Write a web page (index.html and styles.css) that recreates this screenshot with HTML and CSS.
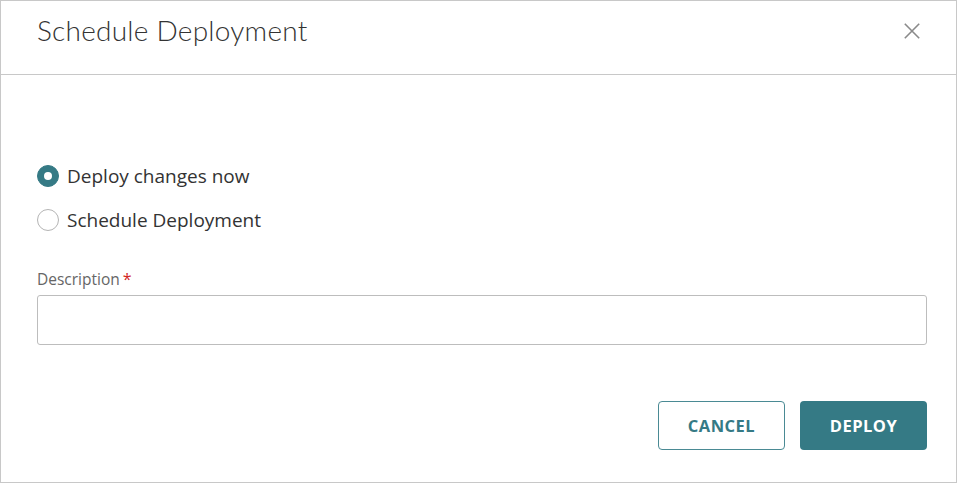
FILE: index.html
```html
<!DOCTYPE html>
<html>
<head>
<meta charset="utf-8">
<link rel="stylesheet" href="styles.css">
</head>
<body>
<div class="dialog">
  <div class="header">
    <h1 class="title">Schedule Deployment</h1>
    <button class="close" aria-label="Close">
      <svg width="16" height="16" viewBox="0 0 16 16"><path d="M0.8 0.8L15.2 15.2M15.2 0.8L0.8 15.2" stroke="#8a8a8a" stroke-width="1.6" fill="none"/></svg>
    </button>
  </div>
  <div class="body">
    <div class="radios">
      <label class="radio"><span class="dot checked"></span>Deploy changes now</label>
      <label class="radio"><span class="dot"></span>Schedule Deployment</label>
    </div>
    <div class="field">
      <div class="label">Description<span class="req">*</span></div>
      <div class="input"></div>
    </div>
    <div class="actions">
      <button class="btn btn-outline">CANCEL</button>
      <button class="btn btn-primary">DEPLOY</button>
    </div>
  </div>
</div>
</body>
</html>
```
FILE: styles.css
```css
html, body { margin: 0; padding: 0; background: #fff; }
body { font-family: "Open Sans", sans-serif; color: #333; }
.dialog {
  width: 955px;
  height: 481px;
  border: 1px solid #c8c8c8;
  display: flex;
  flex-direction: column;
}
.header {
  height: 61px;
  border-bottom: 1px solid #c8c8c8;
  display: flex;
  align-items: flex-start;
  justify-content: space-between;
  padding: 12px 36px 0 36px;
}
.title {
  margin: 0;
  font-family: "Lato", sans-serif;
  font-weight: 300;
  font-size: 28px;
  line-height: 34px;
  color: #333;
  letter-spacing: 0.25px;
}
.close {
  border: 0;
  background: none;
  padding: 0;
  margin-top: 10px;
  width: 16px;
  height: 16px;
  display: flex;
}
.body {
  flex: 1;
  padding: 90px 29px 0 36px;
  display: flex;
  flex-direction: column;
}
.radios { display: flex; flex-direction: column; gap: 22px; }
.radio {
  display: flex;
  align-items: center;
  gap: 8px;
  font-size: 19px;
  line-height: 22px;
  color: #333;
}
.dot {
  width: 20px;
  height: 20px;
  border: 1px solid #b4b4b4;
  border-radius: 50%;
  box-sizing: content-box;
  display: flex;
  align-items: center;
  justify-content: center;
}
.dot.checked { background: #357a85; border-color: #357a85; }
.dot.checked::after {
  content: "";
  width: 8px;
  height: 8px;
  border-radius: 50%;
  background: #fff;
}
.field { margin-top: 38px; }
.label { font-size: 15.5px; color: #666; line-height: 21px; }
.req { color: #d21f1f; margin-left: 3px; font-size: 16px; }
.input {
  margin-top: 5px;
  height: 48px;
  border: 1px solid #bdbdbd;
  border-radius: 3px;
}
.actions {
  margin-top: 56px;
  display: flex;
  justify-content: flex-end;
  gap: 15px;
}
.btn {
  height: 49px;
  width: 127px;
  border-radius: 4px;
  font-family: "Open Sans", sans-serif;
  font-weight: 700;
  font-size: 16.5px;
  letter-spacing: 0.5px;
  box-sizing: border-box;
}
.btn-outline { background: #fff; border: 1.5px solid #4a8a94; color: #357a85; }
.btn-primary { background: #357a85; border: 0; color: #fff; }
```
